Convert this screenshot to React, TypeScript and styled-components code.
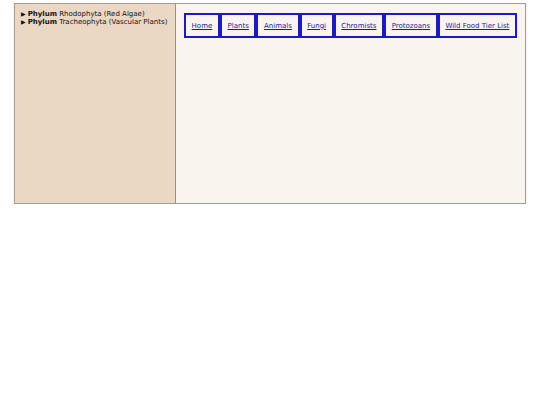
import styled, { createGlobalStyle } from 'styled-components';

const links = ['Home', 'Plants', 'Animals', 'Fungi', 'Chromists', 'Protozoans', 'Wild Food Tier List'];

const phyla = [
  { name: 'Rhodophyta', note: 'Red Algae' },
  { name: 'Tracheophyta', note: 'Vascular Plants' },
];

export default function App() {
  return (
    <>
      <GlobalStyle />
      <Page>
        <Sidebar>
          <Tree>
            {phyla.map((p) => (
              <Branch key={p.name}>
                <Arrow>▶</Arrow>
                <b>Phylum</b> {p.name} ({p.note})
              </Branch>
            ))}
          </Tree>
        </Sidebar>
        <Main>
          <Nav>
            {links.map((l) => (
              <NavItem key={l}>
                <NavLink href="#">{l}</NavLink>
              </NavItem>
            ))}
          </Nav>
        </Main>
      </Page>
    </>
  );
}

const GlobalStyle = createGlobalStyle`
  body {
    margin: 0;
    background: #ffffff;
    font-family: "DejaVu Sans", Verdana, sans-serif;
  }
`;

const Page = styled.div`
  display: flex;
  width: 512px;
  height: 201px;
  margin: 3px auto 0;
  box-sizing: border-box;
  border: 1px solid #a89b90;
  box-shadow: 0 1px 2px rgba(0, 0, 0, 0.15);
`;

const Sidebar = styled.div`
  width: 161px;
  flex-shrink: 0;
  background: #ead7c4;
  border-right: 1px solid #a08f82;
  padding: 6px 6px;
  box-sizing: border-box;
`;

const Tree = styled.ul`
  list-style: none;
  margin: 0;
  padding: 0;
`;

const Branch = styled.li`
  font-size: 7px;
  line-height: 8px;
  color: #111;
  white-space: nowrap;
`;

const Arrow = styled.span`
  font-size: 6px;
  margin-right: 2px;
`;

const Main = styled.div`
  flex: 1;
  background: #f9f4ee;
  padding: 9px 8px;
`;

const Nav = styled.ul`
  display: flex;
  list-style: none;
  margin: 0;
  padding: 0;
`;

const NavItem = styled.li`
  flex: 1 1 auto;
  display: flex;
  align-items: center;
  justify-content: center;
  height: 25px;
  box-sizing: border-box;
  border: 2px solid #1a1acc;
  padding: 0 4px;
  white-space: nowrap;
`;

const NavLink = styled.a`
  font-size: 7px;
  color: #1a1aaa;
  text-decoration: underline;
`;
